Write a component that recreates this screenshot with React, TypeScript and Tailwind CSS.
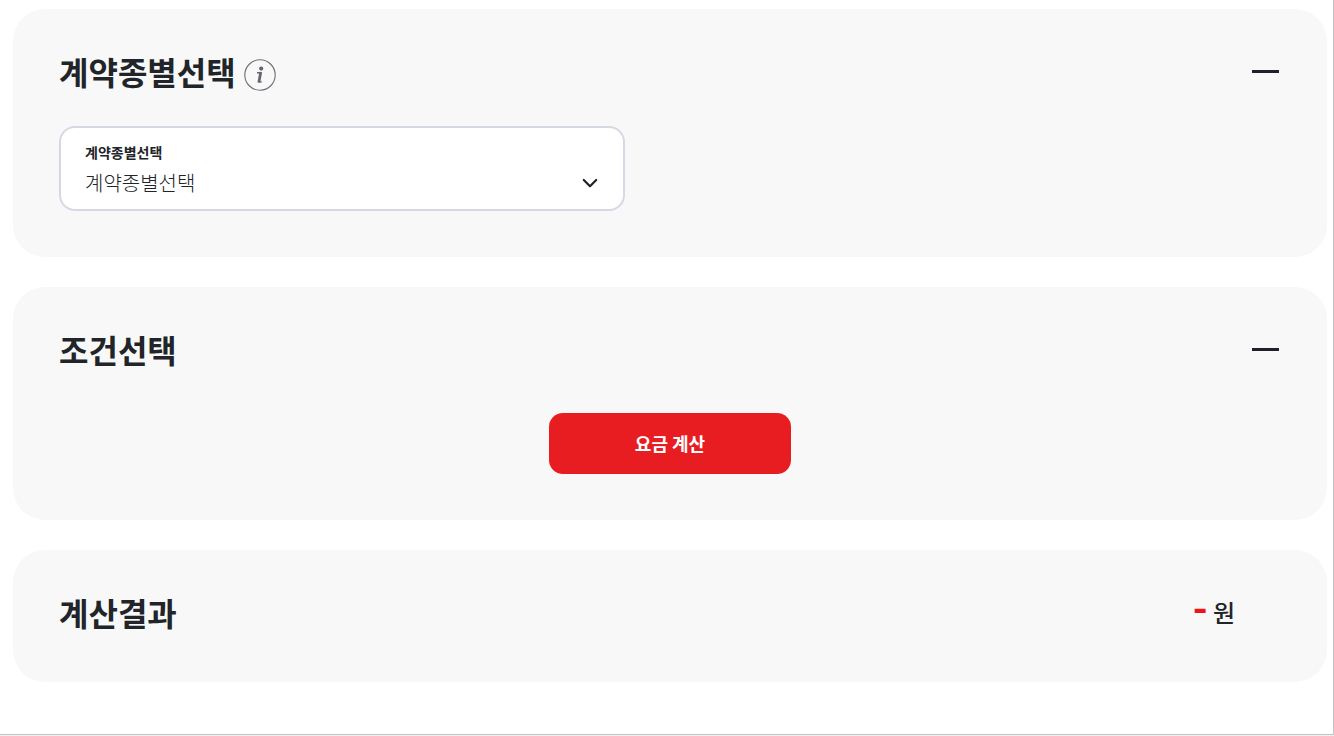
import React from 'react';

interface SectionProps {
  title: string;
  info?: boolean;
  children?: React.ReactNode;
}

const InfoIcon: React.FC = () => (
  <svg className="w-8 h-8" viewBox="0 0 32 32" fill="none" aria-hidden="true">
    <circle cx="16" cy="16" r="15.2" stroke="#6b6e76" strokeWidth="1.1" />
    <circle cx="17.2" cy="9.6" r="2.1" fill="#62656d" />
    <path d="M13 13.8h3.8M14.2 22.9h3.6" stroke="#62656d" strokeWidth="1.4" />
    <path d="M16.8 13.1l-2 10.4" stroke="#62656d" strokeWidth="2.8" />
  </svg>
);

const MinusIcon: React.FC = () => (
  <svg className="w-8 h-8" viewBox="0 0 32 32" aria-hidden="true">
    <rect x="3" y="15" width="27" height="3" fill="#20202a" />
  </svg>
);

const ChevronIcon: React.FC = () => (
  <svg
    className="pointer-events-none absolute right-6 bottom-4 w-5 h-5"
    viewBox="0 0 20 20"
    fill="none"
    aria-hidden="true"
  >
    <path d="M4.8 7l6.2 6.2L17.2 7" stroke="#20202a" strokeWidth="2.2" strokeLinecap="round" strokeLinejoin="round" />
  </svg>
);

const Section: React.FC<SectionProps> = ({ title, info, children }) => (
  <section className="rounded-[32px] bg-[#f8f8f8] px-[46px] pt-[39px] pb-[46px]">
    <div className="flex items-center justify-between">
      <div className="flex items-center gap-2">
        <h2 className="text-[32px] leading-[46px] font-bold">{title}</h2>
        {info && (
          <button type="button" aria-label="계약종별 안내" className="mt-2 cursor-pointer">
            <InfoIcon />
          </button>
        )}
      </div>
      <button type="button" aria-label={`${title} 접기`} className="cursor-pointer">
        <MinusIcon />
      </button>
    </div>
    {children}
  </section>
);

const App: React.FC = () => {
  return (
    <div className="min-h-screen bg-[#f0f0f0] pb-px flex flex-col text-[#212429] font-['Noto_Sans_CJK_KR',sans-serif]">
      <main className="grow flex flex-col gap-[30px] border-r border-b border-[#c4c4c4] bg-white pt-[9px] pl-[13px] pr-1.5">
        <Section title="계약종별선택" info>
          <div className="relative mt-8 w-[566px] max-w-full rounded-2xl border-2 border-[#d5d9e5] bg-white">
            <label htmlFor="contract" className="block px-6 pt-3.5 text-sm leading-5 font-bold">
              계약종별선택
            </label>
            <select
              id="contract"
              className="w-full cursor-pointer appearance-none bg-transparent px-6 pt-1.5 pb-[11px] text-xl leading-[30px] font-light outline-none"
            >
              <option>계약종별선택</option>
            </select>
            <ChevronIcon />
          </div>
        </Section>

        <Section title="조건선택">
          <div className="mt-[41px] flex justify-center">
            <button
              type="button"
              className="h-[61px] w-[242px] cursor-pointer rounded-[14px] bg-[#e81d22] pb-0.5 text-lg font-bold text-white"
            >
              요금 계산
            </button>
          </div>
        </Section>

        <section className="flex items-start justify-between rounded-[32px] bg-[#f8f8f8] pt-[39px] pb-[47px] pl-[46px] pr-[92px]">
          <h2 className="text-[32px] leading-[46px] font-bold">계산결과</h2>
          <p className="text-2xl leading-8 font-medium">
            <strong className="text-[40px] leading-8 font-bold text-[#f01418]">-</strong> 원
          </p>
        </section>
      </main>
    </div>
  );
};

export default App;
